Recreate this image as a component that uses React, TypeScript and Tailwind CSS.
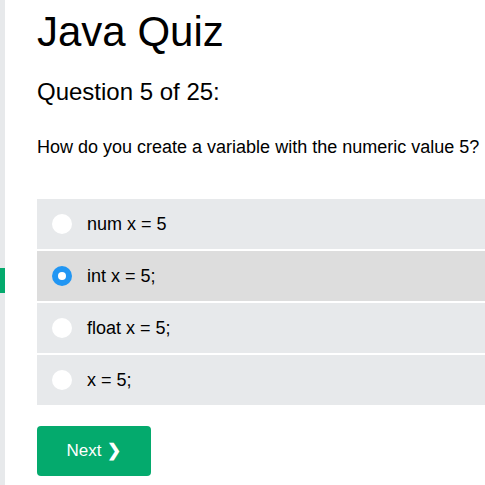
import { useState } from "react"

const options = ["num x = 5", "int x = 5;", "float x = 5;", "x = 5;"]

export default function App() {
    const [selected, setSelected] = useState(1)

    return (
        <div className="flex h-[485px] overflow-hidden bg-white font-['Liberation_Sans',Arial,sans-serif] text-black">
            <div className="w-[5px] shrink-0 bg-[#e7e9eb]">
                <div className="mt-[268px] h-[25px] bg-[#04aa6d]"></div>
            </div>
            <div className="flex-1 pl-[32px] pt-[8px]">
                <h1 className="text-[42px] leading-[48px]">Java Quiz</h1>
                <h2 className="mt-[22px] text-[24px] leading-[28px]">Question 5 of 25:</h2>
                <p className="mt-[29px] text-[18px] leading-[24px] whitespace-nowrap">
                    How do you create a variable with the numeric value 5?
                </p>
                <div className="mt-[40px] flex flex-col gap-[2px]">
                    {options.map((opt, i) => (
                        <label
                            key={opt}
                            onClick={() => setSelected(i)}
                            className={
                                "flex h-[50px] items-center pl-[15px] cursor-pointer " +
                                (selected === i ? "bg-[#dddddd]" : "bg-[#e7e9eb]")
                            }
                        >
                            {selected === i ? (
                                <span className="flex h-[20px] w-[20px] items-center justify-center rounded-full bg-[#2196f3]">
                                    <span className="h-[8px] w-[8px] rounded-full bg-white"></span>
                                </span>
                            ) : (
                                <span className="h-[20px] w-[20px] rounded-full bg-white"></span>
                            )}
                            <span className="ml-[15px] text-[18px]">{opt}</span>
                        </label>
                    ))}
                </div>
                <button className="mt-[21px] flex h-[50px] w-[114px] items-center justify-center gap-[6px] rounded-[4px] bg-[#04aa6d] text-[17px] text-white">
                    Next <span className="font-bold">❯</span>
                </button>
            </div>
        </div>
    )
}
